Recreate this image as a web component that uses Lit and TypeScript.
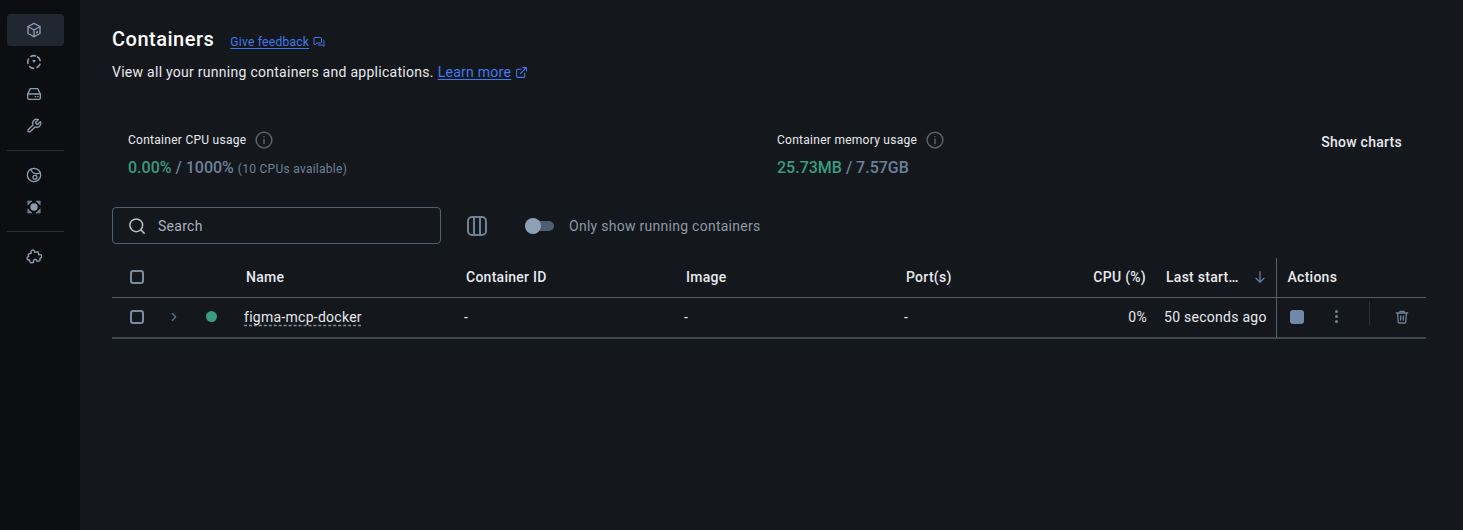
import { LitElement, html, css, svg } from "lit";
import { customElement } from "lit/decorators.js";

const icon = (body: unknown, size = 16) => html`<svg width=${size} height=${size} viewBox="0 0 24 24" fill="none" stroke="currentColor" stroke-width="2" stroke-linecap="round" stroke-linejoin="round">${body}</svg>`;

const cube = svg`<path d="M12 2 21 6.800v10.400L12 22 3 17.200V6.800z"/><path d="M3 6.800 12 12l9-5.200M12 12v10"/><path d="M15 14.500l3-1.500v3l-3 1.500z" fill="currentColor" stroke="none"/>`;
const dashed = svg`<circle cx="12" cy="12" r="9.500" stroke-width="2.400" stroke-dasharray="8.500 3.440" stroke-linecap="butt" transform="rotate(-60 12 12)"/><path d="M9 9h6l-3 4.500z" fill="currentColor" stroke="none"/>`;
const drive = svg`<path d="M6.500 4h11l4 8v6a2 2 0 0 1-2 2h-15a2 2 0 0 1-2-2v-6z"/><path d="M2.500 12h19"/><path d="M14 16h.5M17.500 16h.5"/>`;
const wrench = svg`<path d="M14.700 6.300a1 1 0 0 0 0 1.400l1.600 1.600a1 1 0 0 0 1.400 0l3.770-3.770a6 6 0 0 1-7.940 7.940l-6.910 6.910a2.120 2.120 0 0 1-3-3l6.910-6.910a6 6 0 0 1 7.940-7.940l-3.760 3.760z"/>`;
const globe = svg`<circle cx="12" cy="12" r="10"/><path d="M7.500 3.500c1 3.500 4 6 7 6.500 2.500.4 4.500-.5 7-1.500"/><circle cx="13.500" cy="15.500" r="3"/>`;
const nodes = svg`<circle cx="12" cy="12" r="5.500" fill="currentColor" stroke="none"/><g fill="currentColor" stroke-width="1" opacity=".8"><path d="M3 3h6L3 9zM21 3h-6l6 6zM3 21h6l-6-6zM21 21h-6l6-6z"/></g>`;
const puzzle = svg`<path d="M9.500 5.500a2.700 2.700 0 0 1 5.400 0V7h3.600a1.500 1.500 0 0 1 1.500 1.500V12h1a2.700 2.700 0 0 1 0 5.400h-1v2.100a1.500 1.500 0 0 1-1.500 1.500H15v-1a2.600 2.600 0 0 0-5.200 0v1H6a1.500 1.500 0 0 1-1.500-1.500V16H4a2.600 2.600 0 0 1 0-5.200h.5V8.500A1.500 1.500 0 0 1 6 7h3.500z" transform="rotate(-14 12 12) translate(-.5 0)"/>`;
const ext = svg`<path d="M18 13v6a2 2 0 0 1-2 2H5a2 2 0 0 1-2-2V8a2 2 0 0 1 2-2h6"/><path d="M15 3h6v6M10 14 21 3"/>`;
const chat = svg`<path d="M4 3h11a2 2 0 0 1 2 2v7a2 2 0 0 1-2 2H8l-4 3.500A2 2 0 0 1 2 15V5a2 2 0 0 1 2-2z"/><path d="M21 8a2 2 0 0 1 1 2v10.500L18.500 18H11"/>`;
const search = svg`<circle cx="11" cy="11" r="8.500"/><path d="m21.500 21.500-4.500-4.500"/>`;
const trash = svg`<path d="M3.500 6h17M9 6V3.500h6V6M5.500 6l.8 13a2 2 0 0 0 2 2h7.400a2 2 0 0 0 2-2l.8-13M10 10.500v6M14 10.500v6"/>`;
const info = svg`<circle cx="12" cy="12" r="10.500"/><path d="M12 11v6M12 7.500v.1"/>`;

@customElement("app-root")
export class AppRoot extends LitElement {
  static styles = css`
    :host { display: flex; width: 1463px; height: 530px; background: #14171c; font-family: Roboto, "Liberation Sans", sans-serif; color: #e7eaee; overflow: hidden; letter-spacing: .27px; }
    a { color: #3f7bf0; text-decoration: underline; text-underline-offset: 2px; }
    svg { display: block; flex: none; }
    .rail { width: 80px; flex: none; box-sizing: border-box; background: #0c0e11; padding: 14px 16px 0 7px; display: flex; flex-direction: column; }
    .rail-item { height: 32px; display: flex; align-items: center; justify-content: center; padding-right: 4px; color: #8d9cae; border-radius: 4px; }
    .rail-item.on { background: #202730; }
    .rail-sep { height: 1px; background: #2b2f34; margin: 8px 0; }
    .main { flex: 1; min-width: 0; padding: 24px 37px 0 32px; display: flex; flex-direction: column; }
    .title-row { display: flex; align-items: center; gap: 16px; height: 30px; }
    h1 { margin: 0; font-size: 20px; font-weight: 500; letter-spacing: .5px; color: #fff; }
    .feedback { display: flex; align-items: center; gap: 4px; font-size: 12px; padding-top: 6px; }
    .link-icon { color: #3f7bf0; }
    .sub { display: flex; align-items: center; gap: 4px; margin-top: 8px; font-size: 14px; height: 20px; }
    .stats { display: grid; grid-template-columns: 649px 1fr auto; margin: 48px 24px 0 16px; height: 48px; }
    .stat-label { display: flex; align-items: center; gap: 9px; font-size: 12px; height: 20px; color: #e7eaee; }
    .i { color: #5f6266; }
    .stat-val { font-size: 16px; line-height: 20px; margin-top: 8px; color: #6e8199; font-weight: 500; letter-spacing: 0; }
    .stat-val b { color: #389c7e; font-weight: 500; }
    .stat-val small { font-size: 12px; font-weight: 400; letter-spacing: .27px; }
    .charts { font-size: 14px; font-weight: 500; line-height: 20px; padding-top: 2px; }
    .tools { display: flex; align-items: center; margin-top: 29px; height: 37px; }
    .searchbox { width: 329px; height: 37px; box-sizing: border-box; border: 1px solid #526172; border-radius: 4px; display: flex; align-items: center; gap: 12px; padding-left: 15px; font-size: 14px; color: #a9b4c0; }
    .searchbox svg { color: #b6c0cb; }
    .cols { margin-left: 26px; color: #6e8199; }
    .switch { margin-left: 38px; width: 29px; height: 16px; position: relative; display: flex; align-items: center; }
    .track { width: 29px; height: 10px; border-radius: 5px; background: #4d5e73; }
    .knob { position: absolute; left: 0; top: 0; width: 16px; height: 16px; border-radius: 50%; background: #8fa1b5; }
    .switch-label { margin-left: 15px; font-size: 14px; color: #8c99a8; }
    table { border-collapse: collapse; table-layout: fixed; width: 1314px; margin-top: 14px; font-size: 14px; }
    .c50 { width: 50px; } .c44 { width: 44px; } .c40 { width: 40px; } .c220 { width: 220px; } .c150 { width: 150px; } .c92 { width: 92px; } .c128 { width: 128px; }
    th, td { padding: 0 0 2px; text-align: left; white-space: nowrap; }
    th { height: 37px; font-weight: 500; color: #e7eaee; border-bottom: 1px solid #5a5f65; }
    td { height: 37px; border-bottom: 2px solid #41474e; color: #e7eaee; }
    .box { width: 14px; height: 14px; box-sizing: border-box; border: 2px solid #7c8ca0; border-radius: 3px; margin-left: 18px; }
    .chev { display: block; color: #5f7289; margin-left: 5px; }
    .dot { width: 11px; height: 11px; border-radius: 50%; background: #389c7e; }
    .shift { display: inline-block; margin-left: -2px; }
    .name { text-decoration: underline dashed #7f8ea0; text-underline-offset: 3px; }
    th.r { text-align: right; padding-right: 2px; }
    td.r { text-align: right; padding-right: 1px; }
    .last { display: flex; align-items: center; justify-content: space-between; padding-right: 8px; padding-left: 18px; }
    .last svg { color: #5f7a9a; }
    .ago { padding-left: 16px; }
    .act { border-left: 1px solid #5a5f65; padding-left: 11px; }
    .acts { display: flex; align-items: center; color: #6e8199; }
    .stop { width: 14px; height: 14px; border-radius: 3px; background: #7189a6; margin-left: 2px; }
    .more { margin-left: 31px; width: 3px; display: flex; flex-direction: column; gap: 2px; }
    .more i { display: block; width: 3px; height: 3px; border-radius: 50%; background: #6e8199; }
    .vsep { width: 1px; height: 24px; background: #2b2f34; margin: 0 0 8px 31px; }
    .acts svg { margin-left: 24px; }
  `;

  render() {
    return html`
      <nav class="rail">
        <div class="rail-item on">${icon(cube)}</div>
        <div class="rail-item">${icon(dashed)}</div>
        <div class="rail-item">${icon(drive)}</div>
        <div class="rail-item">${icon(wrench)}</div>
        <div class="rail-sep"></div>
        <div class="rail-item">${icon(globe)}</div>
        <div class="rail-item">${icon(nodes)}</div>
        <div class="rail-sep"></div>
        <div class="rail-item">${icon(puzzle)}</div>
      </nav>
      <main class="main">
        <div class="title-row">
          <h1>Containers</h1>
          <div class="feedback"><a href="#">Give feedback</a><span class="link-icon">${icon(chat, 12)}</span></div>
        </div>
        <div class="sub">View all your running containers and applications. <a href="#">Learn more</a><span class="link-icon">${icon(ext, 13)}</span></div>
        <section class="stats">
          <div>
            <div class="stat-label">Container CPU usage <span class="i">${icon(info, 18)}</span></div>
            <div class="stat-val"><b>0.00%</b> / 1000% <small>(10 CPUs available)</small></div>
          </div>
          <div>
            <div class="stat-label">Container memory usage <span class="i">${icon(info, 18)}</span></div>
            <div class="stat-val"><b>25.73MB</b> / 7.57GB</div>
          </div>
          <div class="charts">Show charts</div>
        </section>
        <div class="tools">
          <div class="searchbox">${icon(search, 18)}Search</div>
          <svg class="cols" width="20" height="20" viewBox="0 0 20 20" fill="none" stroke="currentColor" stroke-width="2"><rect x="1" y="1" width="18" height="18" rx="4"/><path d="M7 1v18M13 1v18"/></svg>
          <div class="switch"><div class="track"></div><div class="knob"></div></div>
          <span class="switch-label">Only show running containers</span>
        </div>
        <table>
          <colgroup><col class="c50"/><col class="c44"/><col class="c40"/><col class="c220"/><col class="c220"/><col class="c220"/><col class="c150"/><col class="c92"/><col class="c128"/><col/></colgroup>
          <thead><tr>
            <th><div class="box"></div></th><th></th><th></th>
            <th>Name</th><th>Container ID</th><th>Image</th><th>Port(s)</th>
            <th class="r">CPU (%)</th>
            <th><div class="last"><span>Last start…</span>${icon(svg`<path d="M12 4v16M6 14l6 6 6-6"/>`, 16)}</div></th>
            <th class="act">Actions</th>
          </tr></thead>
          <tbody><tr>
            <td><div class="box"></div></td>
            <td><span class="chev">${icon(svg`<path d="m9 6 6 6-6 6"/>`, 14)}</span></td>
            <td><div class="dot"></div></td>
            <td><span class="shift name">figma-mcp-docker</span></td><td><span class="shift">-</span></td><td><span class="shift">-</span></td><td><span class="shift">-</span></td>
            <td class="r">0%</td>
            <td class="ago">50 seconds ago</td>
            <td class="act"><div class="acts"><div class="stop"></div><div class="more"><i></i><i></i><i></i></div><div class="vsep"></div>${icon(trash, 16)}</div></td>
          </tr></tbody>
        </table>
      </main>
    `;
  }
}
